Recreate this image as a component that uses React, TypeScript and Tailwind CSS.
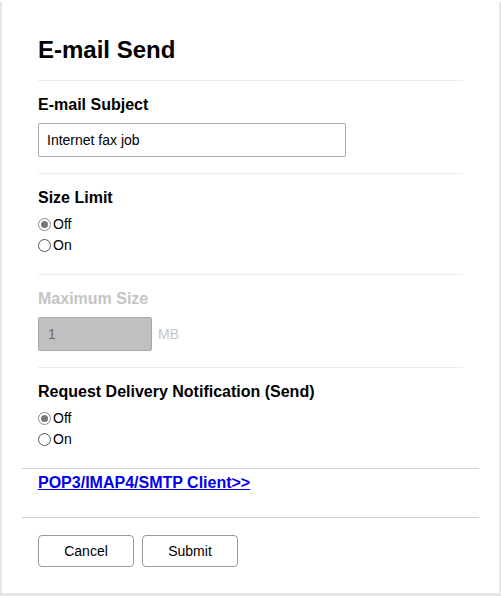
import React, { useState } from 'react';

type RadioProps = { name: string; checked: boolean; label: string; onChange: () => void };

const Radio: React.FC<RadioProps> = ({ checked, label, onChange }) => (
  <label className="flex h-[21px] items-center cursor-pointer" onClick={onChange}>
    <span
      className={
        checked
          ? 'flex h-[13px] w-[13px] items-center justify-center rounded-full border border-[#8a8a8a] bg-white'
          : 'flex h-[13px] w-[13px] items-center justify-center rounded-full border border-[#555] bg-white'
      }
    >
      {checked && <span className="h-[7px] w-[7px] rounded-full bg-[#777]" />}
    </span>
    <span className="ml-[2px] text-[14px] leading-[21px] text-black">{label}</span>
  </label>
);

const App: React.FC = () => {
  const [sizeLimit, setSizeLimit] = useState<'off' | 'on'>('off');
  const [notify, setNotify] = useState<'off' | 'on'>('off');
  const [subject, setSubject] = useState('Internet fax job');

  return (
    <div className="h-[596px] w-[501px] bg-[#e6e6e6] font-['Liberation_Sans',Arial,sans-serif] text-black">
      <div className="ml-[2px] mt-[2px] h-[591px] w-[497px] bg-white px-[20px] pt-[34px]">
        <div className="px-[16px]">
          <h1 className="text-[24px] font-bold leading-[28px]">E-mail Send</h1>
          <div className="mt-[16px] h-px bg-[#ececec]" />

          <section className="pt-[14px] pb-[16px]">
            <h2 className="text-[16px] font-bold leading-[20px]">E-mail Subject</h2>
            <input
              value={subject}
              onChange={e => setSubject(e.target.value)}
              className="mt-[8px] block h-[34px] w-[308px] rounded-[2px] border border-[#a9a9a9] px-[8px] text-[14px] outline-none"
            />
          </section>
          <div className="h-px bg-[#ececec]" />

          <section className="pt-[14px] pb-[18px]">
            <h2 className="text-[16px] font-bold leading-[20px]">Size Limit</h2>
            <div className="mt-[6px]">
              <Radio name="size" label="Off" checked={sizeLimit === 'off'} onChange={() => setSizeLimit('off')} />
              <Radio name="size" label="On" checked={sizeLimit === 'on'} onChange={() => setSizeLimit('on')} />
            </div>
          </section>
          <div className="h-px bg-[#ececec]" />

          <section className="pt-[14px] pb-[16px]">
            <h2 className="text-[16px] font-bold leading-[20px] text-[#c4c4c4]">Maximum Size</h2>
            <div className="mt-[8px] flex items-center">
              <input
                disabled
                value="1"
                readOnly
                className="block h-[34px] w-[114px] rounded-[2px] border border-[#a8a8a8] bg-[#c0c0c0] px-[9px] text-[14px] text-[#6d6d6d]"
              />
              <span className="ml-[6px] text-[14px] text-[#c4c4c4]">MB</span>
            </div>
          </section>
          <div className="h-px bg-[#ececec]" />

          <section className="pt-[14px] pb-[18px]">
            <h2 className="text-[16px] font-bold leading-[20px]">Request Delivery Notification (Send)</h2>
            <div className="mt-[6px]">
              <Radio name="notify" label="Off" checked={notify === 'off'} onChange={() => setNotify('off')} />
              <Radio name="notify" label="On" checked={notify === 'on'} onChange={() => setNotify('on')} />
            </div>
          </section>
        </div>

        <div className="h-px bg-[#cfcfcf]" />
        <div className="flex h-[48px] items-start px-[16px] pt-[4px]">
          <a href="#" className="text-[16px] font-bold leading-[20px] text-[#0000ee] underline">
            POP3/IMAP4/SMTP Client&gt;&gt;
          </a>
        </div>
        <div className="h-px bg-[#cfcfcf]" />

        <div className="flex gap-[8px] px-[16px] pt-[17px]">
          <button className="h-[32px] w-[96px] rounded-[4px] border border-[#9a9a9a] bg-white text-[14px]">Cancel</button>
          <button className="h-[32px] w-[96px] rounded-[4px] border border-[#9a9a9a] bg-white text-[14px]">Submit</button>
        </div>
      </div>
    </div>
  );
};

export default App;
